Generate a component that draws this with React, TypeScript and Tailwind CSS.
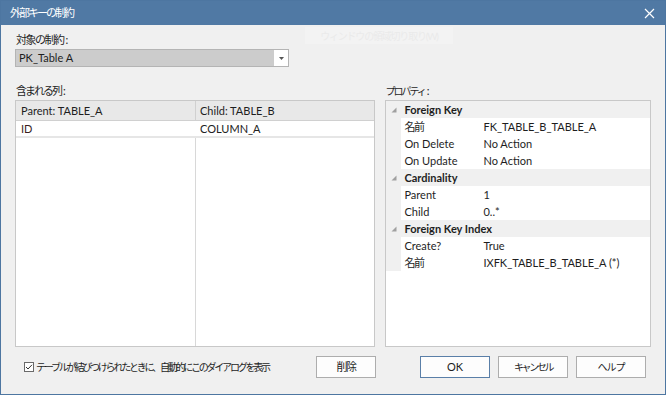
import React from "react";

const font = { fontFamily: 'Lato, "Noto Sans CJK JP", sans-serif' };

function PropRow({ name, value, jp }: { name: string; value: string; jp?: boolean }) {
  return (
    <div className="flex h-[17px] items-center">
      <div className="w-[15px] self-stretch bg-[#f0f0f0]" />
      <div className="flex flex-1 items-center bg-white h-full">
        <div className={`w-[82px] pl-[3px] ${jp ? "tracking-[-1.5px]" : ""}`}>{name}</div>
        <div>{value}</div>
      </div>
    </div>
  );
}

function Cat({ name }: { name: string }) {
  return (
    <div className="flex h-[17px] items-center bg-[#f0f0f0]">
      <div className="w-[15px] flex justify-center">
        <svg width="6" height="6" viewBox="0 0 6 6">
          <polygon points="5.5,0.5 5.5,5.5 0.5,5.5" fill="#a0a0a0" />
        </svg>
      </div>
      <div className="pl-[3px] font-bold">{name}</div>
    </div>
  );
}

function Btn({ children, def, w }: { children: React.ReactNode; def?: boolean; w: string }) {
  return (
    <div
      className={`${w} h-[22px] flex items-center justify-center bg-[#fdfdfd] border ${
        def ? "border-[#5a7fa8]" : "border-[#adadad]"
      }`}
    >
      {children}
    </div>
  );
}

export default function App() {
  return (
    <div
      className="w-[666px] h-[395px] flex flex-col border border-[#4d76a1] bg-[#f0f0f0] text-[11px] leading-[16px] text-[#1e1e1e] overflow-hidden"
      style={font}
    >
      {/* Title bar */}
      <div className="h-[24px] bg-[#5079a4] flex items-center justify-between pl-[9px] pr-[10px] text-white shrink-0">
        <span className="text-[11px] tracking-[-2px]">外部キーの制約</span>
        <svg width="11" height="11" viewBox="0 0 11 11">
          <path d="M1 1 L10 10 M10 1 L1 10" stroke="#ffffff" strokeWidth="1.2" />
        </svg>
      </div>

      <div className="flex-1 flex flex-col pl-[14px] pr-[14px] pt-[7px] relative">
        {/* ghost tooltip */}
        <div className="absolute left-[304px] top-[2px] w-[148px] h-[17px] bg-[#f3f3f3] flex items-center justify-center text-[#eaeaea] text-[10px] tracking-[-1.2px] whitespace-nowrap">
          ウィンドウの領域切り取り(W)
        </div>

        <div className="h-[16px] pl-[1px] flex items-center">
          <span className="tracking-[-1.5px]">対象の制約</span>
          <span className="ml-[2px]">:</span>
        </div>
        <div className="mt-[1px] w-[274px] h-[18px] border border-[#b4b4b4] bg-white flex">
          <div className="flex-1 bg-[#cccccc] flex items-center pl-[3px]">PK_Table A</div>
          <div className="w-[14px] flex items-center justify-center">
            <svg width="5" height="3" viewBox="0 0 5 3">
              <polygon points="0,0 5,0 2.5,3" fill="#555" />
            </svg>
          </div>
        </div>

        <div className="flex gap-[10px] mt-[16px]">
          {/* Left */}
          <div className="w-[361px] flex flex-col">
            <div className="h-[17px] pl-[1px] flex items-start">
              <span className="tracking-[-2px]">含まれる列</span>
              <span className="ml-[2px]">:</span>
            </div>
            <div className="h-[247px] border border-[#c8c8c8] bg-white flex flex-col">
              <div className="flex h-[20px] bg-[#e8e8e8] border-b border-[#d0d0d0] items-center">
                <div className="w-[180px] pl-[5px] border-r border-[#d0d0d0] h-full flex items-center">
                  Parent: TABLE_A
                </div>
                <div className="flex-1 pl-[4px]">Child: TABLE_B</div>
              </div>
              <div className="flex h-[17px] items-center border-b-2 border-[#e6e6e6]">
                <div className="w-[180px] pl-[5px] text-[#3a1e1e]">ID</div>
                <div className="flex-1 pl-[4px] text-[#222]">COLUMN_A</div>
              </div>
              <div className="flex flex-1">
                <div className="w-[180px] border-r border-[#d8d8d8]" />
                <div className="flex-1" />
              </div>
            </div>
          </div>

          {/* Right */}
          <div className="w-[266px] flex flex-col">
            <div className="h-[17px] flex items-start">
              <span className="text-[10px] tracking-[-2px]">プロパティ</span>
              <span className="ml-[2px]">:</span>
            </div>
            <div className="h-[247px] border border-[#c8c8c8] bg-white flex flex-col">
              <Cat name="Foreign Key" />
              <PropRow name="名前" value="FK_TABLE_B_TABLE_A" jp />
              <PropRow name="On Delete" value="No Action" />
              <PropRow name="On Update" value="No Action" />
              <Cat name="Cardinality" />
              <PropRow name="Parent" value="1" />
              <PropRow name="Child" value="0..*" />
              <Cat name="Foreign Key Index" />
              <PropRow name="Create?" value="True" />
              <PropRow name="名前" value="IXFK_TABLE_B_TABLE_A (*)" jp />
            </div>
          </div>
        </div>

        {/* Bottom row */}
        <div className="flex items-center mt-[9px]">
          <div className="w-[361px] flex items-center">
            <div className="ml-[9px] w-[10px] h-[10px] border border-[#6a6a6a] bg-white flex items-center justify-center shrink-0">
              <svg width="8" height="8" viewBox="0 0 8 8">
                <path d="M1 4 L3 6 L7 1.8" stroke="#333" strokeWidth="1" fill="none" />
              </svg>
            </div>
            <span className="ml-[2px] text-[10px] tracking-[-2.2px] whitespace-nowrap">
              テーブルが結びつけられたときに、自動的にこのダイアログを表示
            </span>
            <div className="ml-auto shrink-0">
              <Btn w="w-[60px]">
                <span className="tracking-[-1.5px]">削除</span>
              </Btn>
            </div>
          </div>
          <div className="flex gap-[8px] ml-[44px]">
            <Btn def w="w-[70px]">OK</Btn>
            <Btn w="w-[70px]">
              <span className="text-[10px] tracking-[-2.4px]">キャンセル</span>
            </Btn>
            <Btn w="w-[70px]">
              <span className="text-[10px] tracking-[-1px]">ヘルプ</span>
            </Btn>
          </div>
        </div>
      </div>
    </div>
  );
}
